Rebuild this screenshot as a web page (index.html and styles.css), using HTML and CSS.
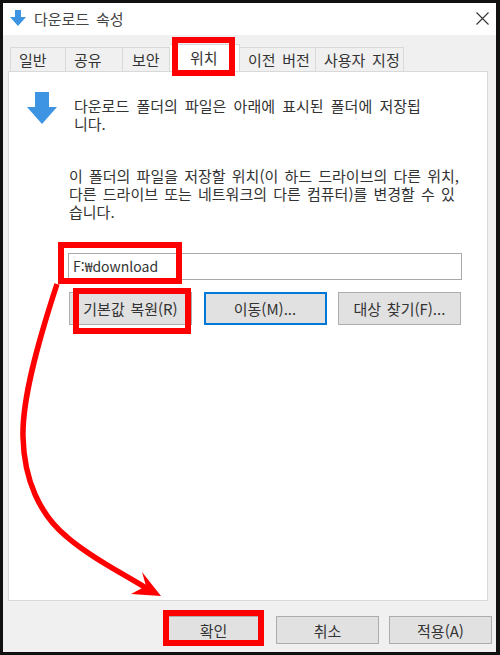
FILE: index.html
```html
<!DOCTYPE html>
<html lang="ko">
<head>
  <meta charset="UTF-8">
  <title>다운로드 속성</title>
  <link rel="stylesheet" href="styles.css">
</head>
<body>
  <div class="window">
    <!-- 제목 표시줄 -->
    <div class="titlebar">
      <svg class="title-icon" viewBox="0 0 16 16"><path d="M5 0h6v7h5l-8 9-8-9h5z" fill="#3d94e2"/></svg>
      <span class="title-text">다운로드 속성</span>
      <svg class="close-icon" viewBox="0 0 13 13"><path d="M.5.5l12 12M12.5.5l-12 12" stroke="#333" stroke-width="1.1" fill="none"/></svg>
    </div>

    <div class="body">
      <!-- 탭 -->
      <div class="tabs">
        <div class="tab tab-general">일반</div>
        <div class="tab tab-share">공유</div>
        <div class="tab tab-security">보안</div>
        <div class="tab tab-active">위치</div>
        <div class="tab tab-previous">이전 버전</div>
        <div class="tab tab-custom">사용자 지정</div>
      </div>

      <!-- 위치 패널 -->
      <div class="panel">
        <div class="intro">
          <svg class="big-icon" viewBox="0 0 30 32"><path d="M8 0h14v15h8L15 32 0 15h8z" fill="#3d94e2"/></svg>
          <p>다운로드 폴더의 파일은 아래에 표시된 폴더에 저장됩<br>니다.</p>
        </div>
        <div class="location">
          <p class="desc">이 폴더의 파일을 저장할 위치(이 하드 드라이브의 다른 위치,<br>다른 드라이브 또는 네트워크의 다른 컴퓨터)를 변경할 수 있<br>습니다.</p>
          <div class="path-input">F:₩download</div>
          <div class="path-buttons">
            <button class="btn">기본값 복원(R)</button>
            <button class="btn btn-focus">이동(M)...</button>
            <button class="btn">대상 찾기(F)...</button>
          </div>
        </div>
      </div>

      <div class="footer">
        <button class="btn footer-btn footer-ok">확인</button>
        <button class="btn footer-btn">취소</button>
        <button class="btn footer-btn">적용(A)</button>
      </div>
    </div>

    <!-- 빨간 표시 -->
    <div class="mark mark-tab"></div>
    <div class="mark mark-path"></div>
    <div class="mark mark-restore"></div>
    <div class="mark mark-ok"></div>
    <svg class="mark-arrow" viewBox="0 0 500 655">
      <path d="M57 284C37 345 22 400 23 437C24 480 40 515 67 537C90 557 120 572 146 588" fill="none" stroke="#f00" stroke-width="5.5"/>
      <path d="M142 572L161 596L131 594L146 586z" fill="#f00"/>
    </svg>
  </div>
</body>
</html>
```

FILE: styles.css
```css
/* 기본 */
html, body {
  margin: 0;
  padding: 0;
}

body {
  width: 500px;
  height: 655px;
  font-family: "Noto Sans CJK KR", "Liberation Sans", sans-serif;
  font-size: 15px;
  word-spacing: 2.5px;
  color: #333;
  overflow: hidden;
}

.window {
  position: relative;
  box-sizing: border-box;
  width: 500px;
  height: 655px;
  padding: 3px 4px 3px 3px;
  background: #111;
  display: flex;
  flex-direction: column;
}

.titlebar {
  display: flex;
  align-items: center;
  box-sizing: border-box;
  height: 32px;
  flex-shrink: 0;
  background: #fff;
  padding: 0 7px 2px 7px;
}

.title-icon {
  width: 16px;
  height: 16px;
  margin-right: 8px;
}

.title-text {
  flex: 1;
  color: #444;
}

.close-icon {
  width: 13px;
  height: 13px;
}

.body {
  flex: 1;
  display: flex;
  flex-direction: column;
  background: #f0f0f0;
  padding: 12px 4px 0 5px;
}

/* 탭 */
.tabs {
  display: flex;
  height: 24px;
  padding-left: 2px;
}

.tab {
  box-sizing: border-box;
  height: 24px;
  line-height: 23px;
  background: #f0f0f0;
  border: 1px solid #d9d9d9;
  border-bottom: none;
  border-left: none;
  padding-left: 8px;
  white-space: nowrap;
}

.tab-general { width: 56px; border-left: 1px solid #d9d9d9; }
.tab-share { width: 57px; }
.tab-security { width: 47px; padding-left: 9px; }
.tab-previous { width: 76px; }
.tab-custom { width: 88px; }

.tab-active {
  width: 70px;
  height: 28px;
  margin-top: -3px;
  margin-bottom: -1px;
  padding-left: 20px;
  line-height: 26px;
  background: #fff;
}

/* 패널 */
.panel {
  box-sizing: border-box;
  width: 480px;
  height: 530px;
  background: #fff;
  border: 1px solid #d9d9d9;
  padding: 20px 25px 0 18px;
}

.intro {
  display: flex;
  height: 75px;
}

.big-icon {
  width: 30px;
  height: 32px;
  flex-shrink: 0;
  margin-right: 17px;
}

p {
  margin: 0;
  line-height: 18px;
}

.intro p {
  padding-top: 5px;
  word-spacing: 3px;
}

.location {
  margin-left: 41px;
}

.desc {
  height: 86px;
  padding-left: 1px;
  white-space: nowrap;
  word-spacing: 2px;
}

.path-input {
  box-sizing: border-box;
  height: 27px;
  line-height: 25px;
  background: #fff;
  border: 1px solid #a9a9a9;
  padding-left: 4px;
  font-size: 14px;
}

.path-buttons {
  display: flex;
  justify-content: space-between;
  margin-top: 12px;
  padding: 0 1px;
}

.btn {
  box-sizing: border-box;
  width: 123px;
  height: 33px;
  padding: 0;
  background: #e1e1e1;
  border: 1px solid #adadad;
  font-family: inherit;
  font-size: 15px;
  word-spacing: 1.5px;
  color: #333;
}

.btn-focus {
  border: 2px solid #0078d7;
}

.footer {
  display: flex;
  justify-content: flex-end;
  gap: 10px;
  padding-top: 15px;
}

.footer-btn {
  width: 103px;
  height: 28px;
}

.footer-ok {
  width: 101px;
  margin-right: 2px;
}

/* 빨간 표시 */
.mark {
  position: absolute;
  box-sizing: border-box;
  border: 6px solid #f00;
}

.mark-tab { left: 172px; top: 37px; width: 63px; height: 39px; }
.mark-path { left: 58px; top: 242px; width: 124px; height: 42px; }
.mark-restore { left: 73px; top: 288px; width: 118px; height: 46px; }
.mark-ok { left: 163px; top: 610px; width: 101px; height: 36px; }

.mark-arrow {
  position: absolute;
  left: 0;
  top: 0;
  width: 500px;
  height: 655px;
}
```
